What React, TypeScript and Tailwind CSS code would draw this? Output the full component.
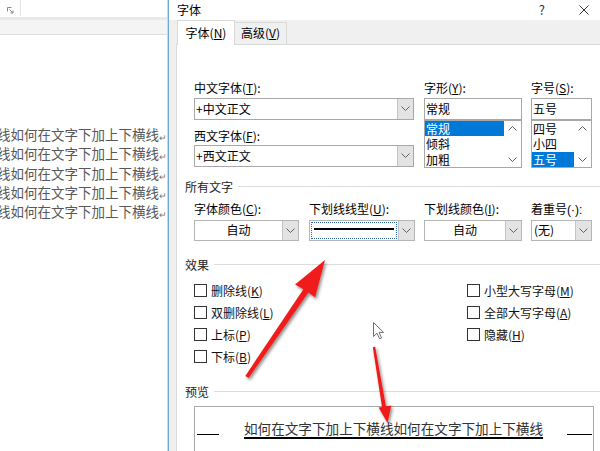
import React from "react";

const Chevron = ({ up = false }: { up?: boolean }) => (
  <svg width="9" height="5" viewBox="0 0 9 5" fill="none">
    <path
      d={up ? "M0.5 4.5 L4.5 0.5 L8.5 4.5" : "M0.5 0.5 L4.5 4.5 L8.5 0.5"}
      stroke="#606060"
      strokeWidth="1"
    />
  </svg>
);

const DropButton = () => (
  <div className="flex w-[16px] items-center justify-center border-l border-[#c4c4c4] bg-[#e3e3e3]">
    <Chevron />
  </div>
);

const Section = ({ title, className }: { title: string; className: string }) => (
  <div className={"-ml-[9px] flex h-[16px] items-center " + className}>
    <span className="text-[12px] leading-[16px] text-[#222]">{title}</span>
    <div className="ml-[5px] h-px flex-1 bg-[#dcdcdc]" />
  </div>
);

const Check = ({ children }: { children: React.ReactNode }) => (
  <div className="flex h-[22px] items-center">
    <div className="h-[13px] w-[13px] border border-[#333] bg-white" />
    <span className="ml-[4px] text-[12px] text-[#111]">{children}</span>
  </div>
);

const docLines = [0, 1, 2, 3, 4];

export default function App() {
  return (
    <div className="relative flex h-[451px] w-[600px] overflow-hidden bg-white font-['Noto_Sans_CJK_SC',sans-serif] text-black">
      {/* document behind the dialog */}
      <div className="flex w-[168px] shrink-0 flex-col border-r border-[#d6d6d6]">
        <div className="flex h-[17px] bg-white">
          <div className="flex h-[16px] w-[21px] items-end justify-end border-r border-[#e3e3e3] pb-[2px] pr-[6px]">
            <svg width="7" height="7" viewBox="0 0 7 7" fill="none">
              <path d="M0.5 4.5V0.5H4.5" stroke="#8a8a8a" />
              <path d="M2.5 2.5L6 6M6 3.5V6H3.5" stroke="#8a8a8a" />
            </svg>
          </div>
        </div>
        <div className="h-[18px] border-t-[3px] border-b border-t-[#e9e9e9] border-b-[#dedede] bg-[#f4f4f4]" />
        <div className="pt-[91px]">
          {docLines.map((i) => (
            <div
              key={i}
              className="flex h-[19.25px] justify-end overflow-hidden whitespace-nowrap font-['Liberation_Serif','Noto_Sans_CJK_SC',serif] text-[13.5px] leading-[19.25px] text-[#585858]"
            >
              <span>横线如何在文字下加上下横线</span>
              <span className="mt-[3px] text-[9px] text-[#777]">↵</span>
            </div>
          ))}
        </div>
      </div>

      {/* font dialog */}
      <div className="flex flex-1 flex-col border-l border-[#6ea7e0] bg-[#f0f0f0]">
        <div className="flex h-[25px] items-center bg-white pl-[8px]">
          <span className="text-[12px]">字体</span>
          <span className="ml-auto text-[13px] text-[#333]">?</span>
          <svg className="ml-[34px] mr-[11px]" width="10" height="10" viewBox="0 0 10 10">
            <path d="M0.5 0.5L9.5 9.5M9.5 0.5L0.5 9.5" stroke="#333" strokeWidth="1" />
          </svg>
        </div>
        <div className="flex h-[32px] items-end pl-[8px]">
          <div className="relative z-10 -mb-px flex h-[25px] w-[58px] items-center justify-center border border-b-0 border-[#d9d9d9] bg-white text-[12px]">
            字体(<u>N</u>)
          </div>
          <div className="flex h-[22px] w-[52px] items-center justify-center border border-b-0 border-l-0 border-[#d9d9d9] text-[12px]">
            高级(<u>V</u>)
          </div>
        </div>
        <div className="ml-[7px] flex-1 border border-r-0 border-[#d9d9d9] bg-white pl-[17px] pt-[35px] text-[12px]">
          {/* font faces */}
          <div className="flex">
            <div className="flex w-[220px] flex-col">
              <div className="h-[16px] leading-[16px]">中文字体(<u>T</u>):</div>
              <div className="mt-[2px] flex h-[22px] border border-[#a8a8a8]">
                <div className="flex flex-1 items-center pl-[1px]">+中文正文</div>
                <DropButton />
              </div>
              <div className="mt-[8px] h-[16px] leading-[16px]">西文字体(<u>F</u>):</div>
              <div className="mt-[1px] flex h-[22px] border border-[#a8a8a8]">
                <div className="flex flex-1 items-center pl-[1px]">+西文正文</div>
                <DropButton />
              </div>
            </div>
            <div className="ml-[10px] flex w-[98px] flex-col">
              <div className="h-[16px] leading-[16px]">字形(<u>Y</u>):</div>
              <div className="mt-[2px] flex h-[22px] items-center border border-[#a8a8a8] pl-[1px]">常规</div>
              <div className="flex h-[48px] border border-[#a8a8a8]">
                <div className="flex flex-1 flex-col">
                  <div className="h-[15.5px] bg-[#0078d7] pl-[1px] leading-[15.5px] text-white">常规</div>
                  <div className="h-[15.5px] pl-[1px] leading-[15.5px]">倾斜</div>
                  <div className="h-[15.5px] pl-[1px] leading-[15.5px]">加粗</div>
                </div>
                <div className="flex w-[17px] flex-col items-center justify-between py-[5px]">
                  <Chevron up />
                  <Chevron />
                </div>
              </div>
            </div>
            <div className="ml-[9px] flex w-[61px] flex-col">
              <div className="h-[16px] leading-[16px]">字号(<u>S</u>):</div>
              <div className="mt-[2px] flex h-[22px] items-center border border-[#a8a8a8] pl-[1px]">五号</div>
              <div className="flex h-[48px] border border-[#a8a8a8]">
                <div className="flex flex-1 flex-col">
                  <div className="h-[15.5px] pl-[1px] leading-[15.5px]">四号</div>
                  <div className="h-[15.5px] pl-[1px] leading-[15.5px]">小四</div>
                  <div className="h-[15.5px] bg-[#0078d7] pl-[1px] leading-[15.5px] text-white">五号</div>
                </div>
                <div className="flex w-[17px] flex-col items-center justify-between py-[5px]">
                  <Chevron up />
                  <Chevron />
                </div>
              </div>
            </div>
          </div>

          <Section title="所有文字" className="mt-[11px]" />

          {/* colours and underline */}
          <div className="mt-[6px] flex">
            <div className="flex w-[105px] flex-col">
              <div className="h-[16px] leading-[16px]">字体颜色(<u>C</u>):</div>
              <div className="mt-[3px] flex h-[21px] border border-[#b5b5b5]">
                <div className="flex flex-1 items-center justify-center">自动</div>
                <DropButton />
              </div>
            </div>
            <div className="ml-[10px] flex w-[106px] flex-col">
              <div className="h-[16px] leading-[16px]">下划线线型(<u>U</u>):</div>
              <div className="mt-[3px] flex h-[21px] border border-[#b5b5b5]">
                <div className="m-[1px] flex flex-1 items-start border border-dotted border-[#2f67b0] px-[2px] pt-[5px]">
                  <div className="h-[2px] w-full bg-black" />
                </div>
                <DropButton />
              </div>
            </div>
            <div className="ml-[9px] flex w-[98px] flex-col">
              <div className="h-[16px] leading-[16px]">下划线颜色(<u>I</u>):</div>
              <div className="mt-[3px] flex h-[21px] border border-[#b5b5b5]">
                <div className="flex flex-1 items-center justify-center">自动</div>
                <DropButton />
              </div>
            </div>
            <div className="ml-[9px] flex w-[61px] flex-col">
              <div className="h-[16px] whitespace-nowrap leading-[16px]">
                着重号<span className="font-['Liberation_Sans',sans-serif]">(·):</span>
              </div>
              <div className="mt-[3px] flex h-[21px] border border-[#b5b5b5]">
                <div className="flex flex-1 items-center pl-[2px]">(无)</div>
                <DropButton />
              </div>
            </div>
          </div>

          <Section title="效果" className="mt-[16px]" />

          {/* effects */}
          <div className="mt-[7px] flex">
            <div className="flex w-[273px] flex-col">
              <Check>删除线(<u>K</u>)</Check>
              <Check>双删除线(<u>L</u>)</Check>
              <Check>上标(<u>P</u>)</Check>
              <Check>下标(<u>B</u>)</Check>
            </div>
            <div className="flex flex-col">
              <Check>小型大写字母(<u>M</u>)</Check>
              <Check>全部大写字母(<u>A</u>)</Check>
              <Check>隐藏(<u>H</u>)</Check>
            </div>
          </div>

          <Section title="预览" className="mt-[16px]" />

          {/* preview */}
          <div className="mt-[6px] h-[60px] w-[400px] border border-[#a9a9a9] pt-[14px]">
            <div className="flex h-[18px]">
              <div className="ml-[2px] mt-[13px] h-px w-[22px] bg-black" />
              <span className="ml-[25px] whitespace-nowrap font-['Liberation_Serif','Noto_Sans_CJK_SC',serif] text-[13.6px] leading-[18px] text-[#333] underline decoration-black decoration-[1.5px] underline-offset-[3px]">
                如何在文字下加上下横线如何在文字下加上下横线
              </span>
              <div className="ml-[24px] mt-[13px] h-px w-[25px] bg-black" />
            </div>
          </div>
        </div>
      </div>

      {/* annotations drawn over the screenshot */}
      <svg className="pointer-events-none absolute left-0 top-0" width="600" height="451" viewBox="0 0 600 451">
        <defs>
          <filter id="shadow" x="-20%" y="-20%" width="140%" height="140%">
            <feDropShadow dx="1.5" dy="2" stdDeviation="1.5" floodColor="#000" floodOpacity="0.45" />
          </filter>
        </defs>
        <polygon
          filter="url(#shadow)"
          fill="#f01c1c"
          points="245.3,375.9 303.4,289.3 295.1,284.4 325,260 315.1,297.6 308.4,292.6 248.7,378.1"
        />
        <polygon
          filter="url(#shadow)"
          fill="#f01c1c"
          points="372.8,347.2 382.0,407.0 378.6,407.6 387.5,423 391.3,405.6 385.9,406.3 375.2,346.8"
        />
        <path
          d="M373.5 322.5V336.5L377 333.3L379.6 338.8L381.6 337.9L379 332.4H383.6Z"
          fill="#fff"
          stroke="#6f6f6f"
          strokeWidth="1"
        />
      </svg>
    </div>
  );
}
